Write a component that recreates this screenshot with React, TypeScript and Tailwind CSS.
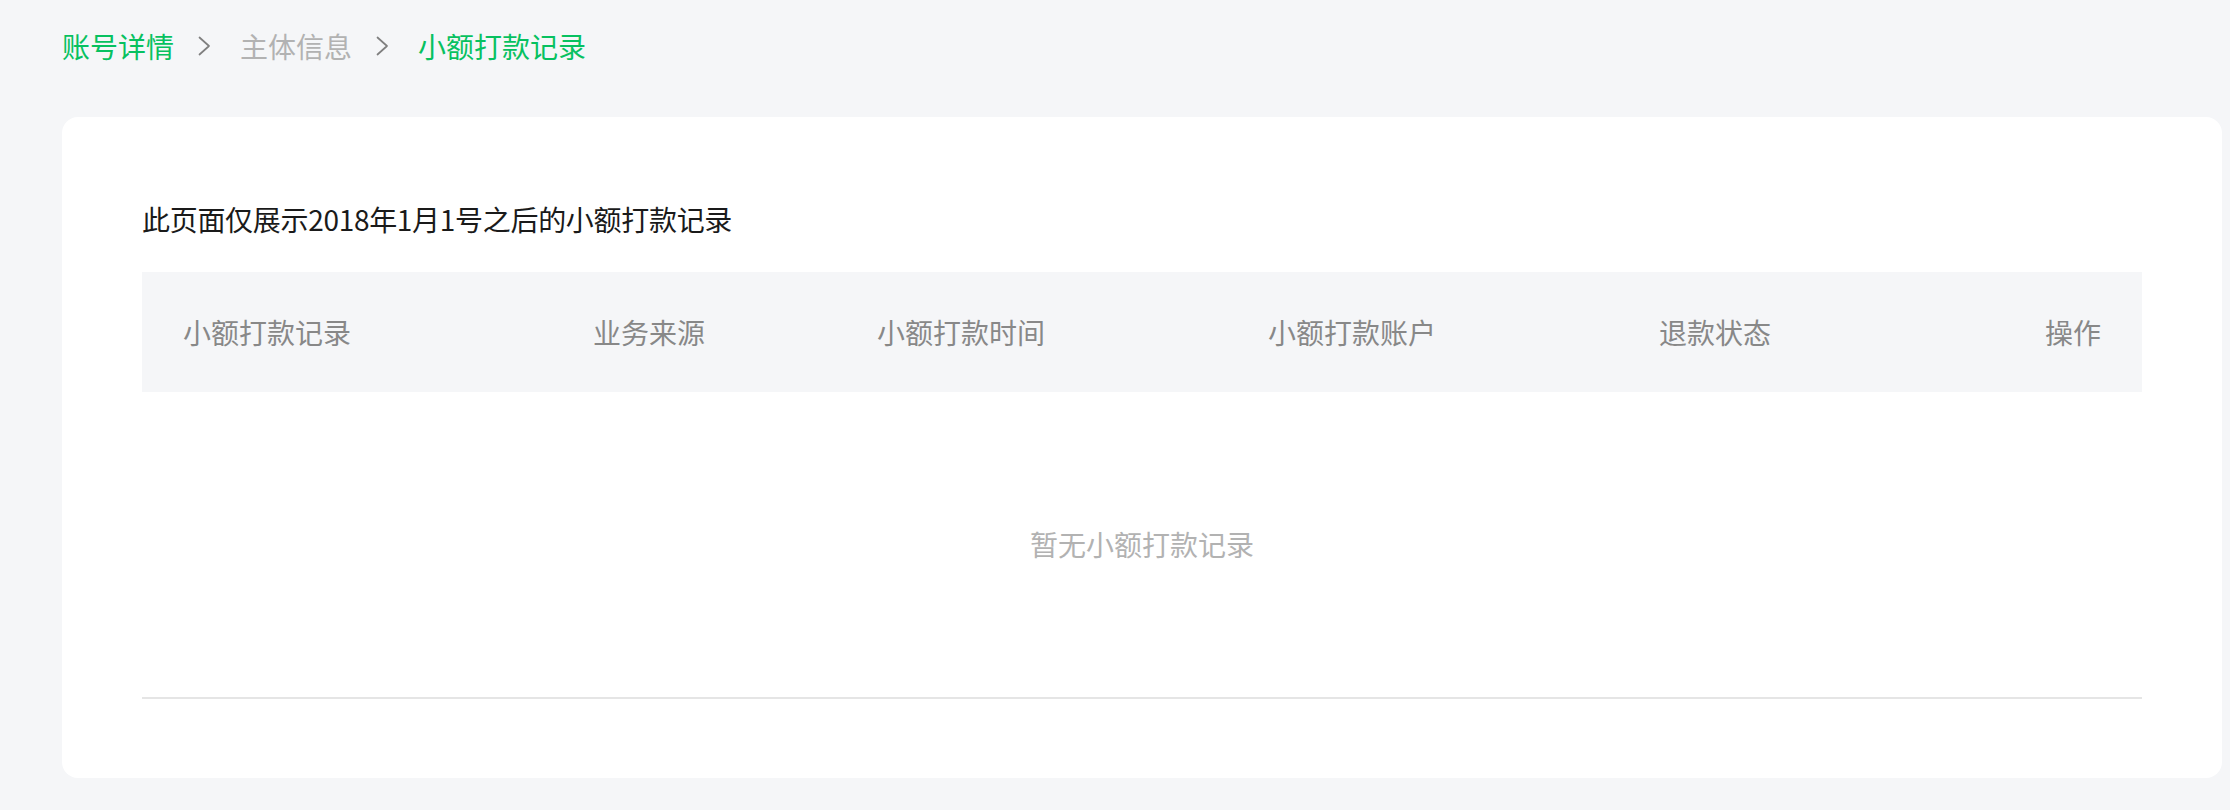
const font = { fontFamily: '"Noto Sans CJK SC", "Noto Sans", sans-serif' };

const columns = ['小额打款记录', '业务来源', '小额打款时间', '小额打款账户', '退款状态'];

const Chevron = () => (
    <svg width="13" height="20" viewBox="0 0 13 20" className="mr-[29px] ml-[24px] shrink-0">
        <path d="M1.5 1.5 L11 10 L1.5 18.5" fill="none" stroke="#7f7f7f" strokeWidth="1.7" strokeLinecap="round" strokeLinejoin="round" />
    </svg>
);

const App = () => {
    return (
        <div className="min-h-screen w-full bg-[#f5f6f8] pt-[26px] pr-[8px] pl-[62px]" style={font}>
            {/* breadcrumb */}
            <nav className="flex h-[40px] items-center text-[28px] leading-[40px]">
                <span className="text-[#07c160]">账号详情</span>
                <Chevron />
                <span className="text-[#b2b2b2]">主体信息</span>
                <Chevron />
                <span className="text-[#07c160]">小额打款记录</span>
            </nav>

            <div className="mt-[51px] w-[2160px] rounded-[16px] bg-white px-[80px] pt-[82px] pb-[79px]">
                <p className="h-[40px] text-[28px] leading-[40px] tracking-[-0.3px] text-[#1a1a1a]">此页面仅展示2018年1月1号之后的小额打款记录</p>

                <div className="mt-[33px]">
                    {/*---------------------- table head ----------------------- */}
                    <div className="grid h-[120px] grid-cols-[410px_284px_391px_391px_1fr_auto] items-center bg-[#f5f6f8] px-[41px] text-[28px] leading-[40px] text-[#888888]">
                        {columns.map((c) => (
                            <span key={c}>{c}</span>
                        ))}
                        <span className="text-right">操作</span>
                    </div>
                    <div className="flex h-[307px] items-center justify-center border-b-2 border-[#e5e5e5] pb-[2px] text-[28px] leading-[40px] text-[#b2b2b2]">
                        暂无小额打款记录
                    </div>
                </div>
            </div>
        </div>
    );
};

export default App;
